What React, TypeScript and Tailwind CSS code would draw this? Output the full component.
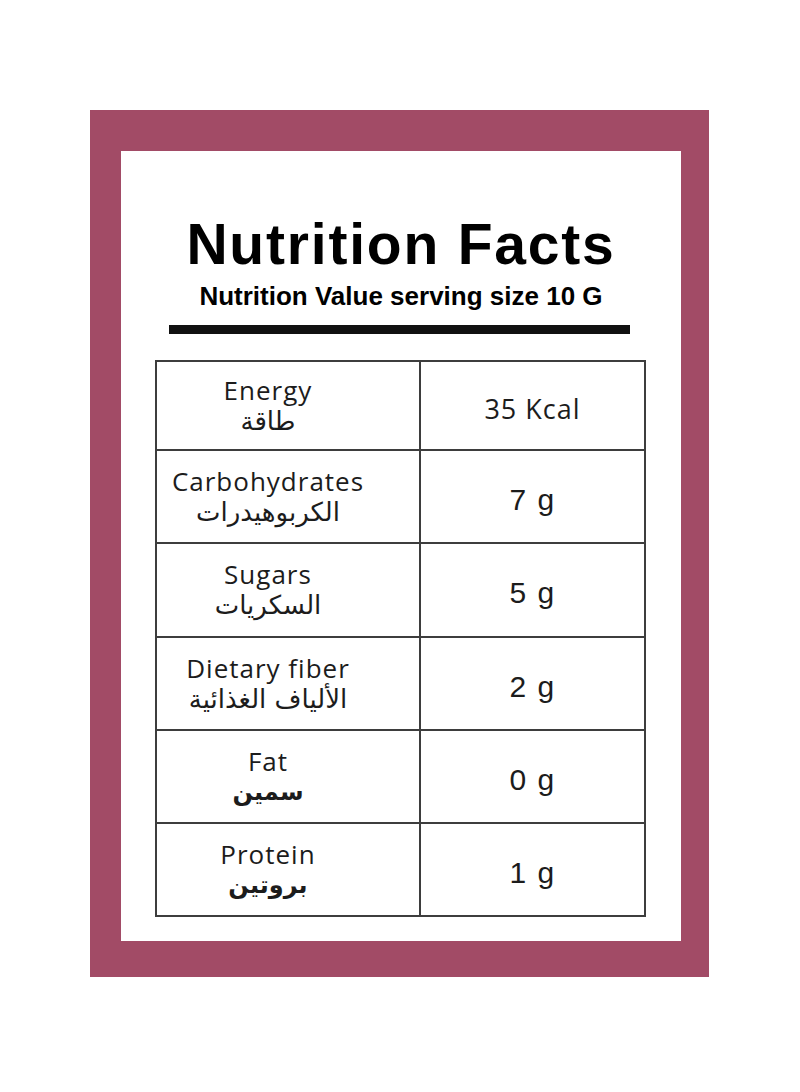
const rows = [
  { en: 'Energy', ar: 'طاقة', value: '35 Kcal', kcal: true, h: 'h-[87px]' },
  { en: 'Carbohydrates', ar: 'الكربوهيدرات', value: '7 g', h: 'h-[93px]' },
  { en: 'Sugars', ar: 'السكريات', value: '5 g', h: 'h-[94px]' },
  { en: 'Dietary fiber', ar: 'الألياف الغذائية', value: '2 g', h: 'h-[93px]' },
  { en: 'Fat', ar: 'سمين', value: '0 g', bold: true, h: 'h-[93px]' },
  { en: 'Protein', ar: 'بروتين', value: '1 g', bold: true, h: 'h-[93px]' },
];

export default function App() {
  return (
    <div className="w-[800px] h-[1092px] bg-white pt-[110px] pl-[90px]">
      <div className="w-[619px] h-[867px] bg-[#a24b66] pt-[41px] pl-[31px]">
        <div className="w-[560px] h-[790px] bg-white pt-[65px]">
          <h1 className="text-center font-['Liberation_Sans',Arial,sans-serif] font-bold text-[57px] leading-[57px] tracking-[1.8px] text-black">
            Nutrition Facts
          </h1>
          <p className="mt-[10px] text-center font-['Liberation_Sans',Arial,sans-serif] font-bold text-[26px] leading-[26px] text-black">
            Nutrition Value serving size 10 G
          </p>
          <div className="ml-[48px] mt-[16px] w-[461px] h-[9px] bg-[#111]" />

          <div className="ml-[34px] mt-[26px] w-[491px] border-2 border-[#3d3d3d]">
            {rows.map((r, i) => (
              <div
                key={r.en}
                className={`flex ${r.h} ${i > 0 ? 'border-t-2 border-[#3d3d3d]' : ''}`}
              >
                <div className="w-[264px] pr-[40px] border-r-2 border-[#3d3d3d] flex flex-col items-center justify-center pt-[2px] text-[#1c1c1c]">
                  <span className="font-['Open_Sans','DejaVu_Sans',sans-serif] text-[26px] leading-[28px] tracking-[1px]">
                    {r.en}
                  </span>
                  <span
                    dir="rtl"
                    className={`font-['DejaVu_Sans',sans-serif] leading-[34px] ${r.bold ? 'font-bold text-[24px]' : 'text-[26px]'}`}
                  >
                    {r.ar}
                  </span>
                </div>
                <div className="flex-1 flex items-center justify-center pt-[6px] text-[#1c1c1c]">
                  {r.kcal ? (
                    <span className="font-['Open_Sans',sans-serif] text-[27px] leading-[30px] tracking-[1px]">
                      {r.value}
                    </span>
                  ) : (
                    <span className="font-['Liberation_Sans',Arial,sans-serif] text-[30px] leading-[30px] tracking-[1.5px]">
                      {r.value}
                    </span>
                  )}
                </div>
              </div>
            ))}
          </div>
        </div>
      </div>
    </div>
  );
}
